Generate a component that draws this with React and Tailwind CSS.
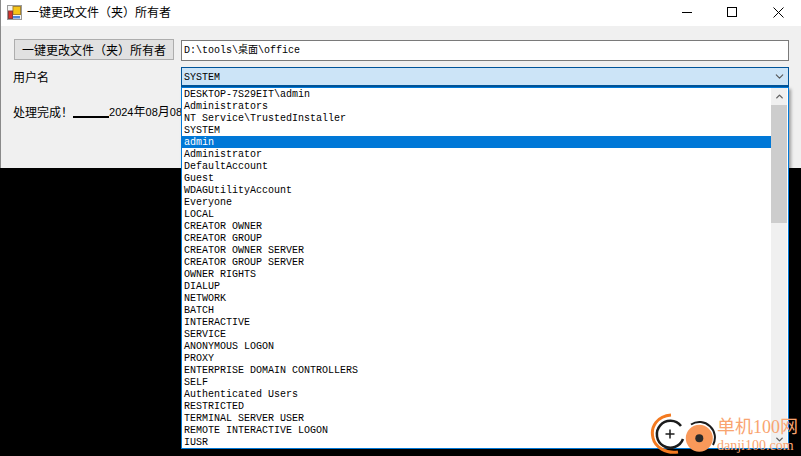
import { ChevronDown, ChevronUp } from 'lucide-react';

const USERS = [
  'DESKTOP-7S29EIT\\admin',
  'Administrators',
  'NT Service\\TrustedInstaller',
  'SYSTEM',
  'admin',
  'Administrator',
  'DefaultAccount',
  'Guest',
  'WDAGUtilityAccount',
  'Everyone',
  'LOCAL',
  'CREATOR OWNER',
  'CREATOR GROUP',
  'CREATOR OWNER SERVER',
  'CREATOR GROUP SERVER',
  'OWNER RIGHTS',
  'DIALUP',
  'NETWORK',
  'BATCH',
  'INTERACTIVE',
  'SERVICE',
  'ANONYMOUS LOGON',
  'PROXY',
  'ENTERPRISE DOMAIN CONTROLLERS',
  'SELF',
  'Authenticated Users',
  'RESTRICTED',
  'TERMINAL SERVER USER',
  'REMOTE INTERACTIVE LOGON',
  'IUSR',
];

const SANS = "font-['Noto_Sans_CJK_SC','Liberation_Sans',sans-serif]";
const MONO = "font-['Liberation_Mono','Noto_Sans_CJK_SC',monospace]";

function AppIcon() {
  return (
    <svg width="15" height="15" viewBox="0 0 15 15">
      <rect x="0.5" y="0.5" width="14" height="14" fill="#f4f4f4" stroke="#9a9a9a" />
      <rect x="6" y="1.5" width="7.5" height="8" fill="#f5c518" stroke="#a8842a" />
      <rect x="1.5" y="6" width="4" height="7.5" fill="#d8322a" stroke="#8a3a3a" />
      <rect x="6" y="11" width="7" height="2.5" fill="#4f86d9" />
    </svg>
  );
}

function WindowButtons() {
  return (
    <div className="flex items-center h-full pb-[2px]">
      <div className="w-[46px] h-full pl-[2px] flex items-center justify-center">
        <svg width="10" height="10" viewBox="0 0 10 10"><path d="M0 5.5H10" stroke="#000" fill="none" /></svg>
      </div>
      <div className="w-[46px] h-full flex items-center justify-center">
        <svg width="10" height="10" viewBox="0 0 10 10"><rect x="0.5" y="0.5" width="9" height="9" stroke="#000" fill="none" /></svg>
      </div>
      <div className="w-[46px] h-full flex items-center justify-center">
        <svg width="11" height="11" viewBox="0 0 11 11"><path d="M0.5 0.5L10.5 10.5M10.5 0.5L0.5 10.5" stroke="#000" fill="none" /></svg>
      </div>
    </div>
  );
}

function UserList() {
  return (
    <div className="absolute left-[181px] top-[87px] w-[608px] h-[362px] bg-white border border-[#0078d7] flex shadow-[2px_2px_3px_rgba(0,0,0,0.35)]">
      <ul className={`flex-1 ${MONO} text-[10px] text-black`}>
        {USERS.map((name) => (
          <li
            key={name}
            className={`h-3 leading-[14px] pl-[2px] whitespace-pre ${name === 'admin' ? 'bg-[#0078d7] text-white' : ''}`}
          >
            {name}
          </li>
        ))}
      </ul>
      <div className="w-[16px] mr-px flex flex-col bg-[#f0f0f0]">
        <div className="h-[17px] flex items-center justify-center text-[#606060]">
          <ChevronUp size={11} strokeWidth={3} />
        </div>
        <div className="h-[118px] bg-[#cdcdcd]" />
        <div className="flex-1" />
        <div className="h-[17px] flex items-center justify-center text-[#606060]">
          <ChevronDown size={11} strokeWidth={3} />
        </div>
      </div>
    </div>
  );
}

function Watermark() {
  return (
    <div className="absolute left-[650px] top-[412px] w-[151px] h-[44px] flex items-start">
      <svg width="66" height="44" viewBox="0 0 66 44" className="shrink-0">
        <path d="M21 3 C 8 4 0 14 3 26 C 5 35 16 42 28 40" stroke="#f47a20" strokeWidth="3" fill="none" />
        <path d="M31 14 A13.5 13.5 0 1 0 33 27" stroke="#1c1c1c" strokeWidth="2.5" fill="none" />
        <path d="M15.5 22H24.5M20 17.5V26.5" stroke="#1c1c1c" strokeWidth="1.5" />
        <circle cx="49.3" cy="26.3" r="13.5" fill="#f9995a" />
        <path d="M41 12.5 A15.5 15.5 0 0 1 63 33" stroke="#1c1c1c" strokeWidth="2" fill="none" />
        <circle cx="49.3" cy="26.3" r="4" fill="#2a2a2a" />
      </svg>
      <div className="flex flex-col ml-[1px] font-['Liberation_Serif','Noto_Sans_CJK_SC',serif] text-[#f9a470]">
        <span className="text-[18px] leading-[24px] mt-[3px] whitespace-nowrap">单机100网</span>
        <span className="text-[14px] leading-[14px] whitespace-nowrap">danji100.com</span>
      </div>
    </div>
  );
}

export default function App() {
  return (
    <div className={`relative w-[801px] h-[456px] bg-black overflow-hidden ${SANS}`}>
      <div className="h-[168px] bg-[#f0f0f0] border-l border-[#8a8a8a] flex flex-col">
        {/* Title bar */}
        <div className="h-[26px] bg-white flex items-center justify-between">
          <div className="flex items-center pl-[6px] pb-[2px]">
            <AppIcon />
            <span className="ml-[5px] text-[12px] text-black">一键更改文件（夹）所有者</span>
          </div>
          <WindowButtons />
        </div>

        {/* Form */}
        <div className="flex flex-col pl-[13px] pr-[12px] pt-[13px]">
          <div className="flex items-start">
            <button className="w-[160px] h-[21px] bg-[#e1e1e1] border border-[#adadad] text-[12px] leading-none text-black">
              一键更改文件（夹）所有者
            </button>
            <div className={`ml-[7px] mt-px flex-1 h-[21px] bg-white border border-[#7a7a7a] pl-[2px] leading-[19px] text-[10px] text-black ${MONO}`}>
              D:\tools\桌面\office
            </div>
          </div>
          <div className="flex items-start mt-[6px]">
            <span className="w-[168px] text-[12px] leading-[20px] text-black -ml-px">用户名</span>
            <div className={`flex-1 h-[20px] bg-[#cce4f7] border border-[#005499] border-b-2 pl-[2px] pr-[2px] flex items-center justify-between text-[10px] text-black ${MONO}`}>
              <span className="pt-px">SYSTEM</span>
              <ChevronDown size={13} className="text-[#555]" />
            </div>
          </div>
          <div className="flex items-end mt-[15px] -ml-px text-[12px] text-black whitespace-nowrap">
            <span>处理完成！</span>
            <span className="w-[36px] h-[2px] mb-[3px] bg-black" />
            <span className="font-['Liberation_Sans',sans-serif] text-[11px]">
              2024<span className={`text-[12px] ${SANS}`}>年</span>08<span className={`text-[12px] ${SANS}`}>月</span>08
            </span>
          </div>
        </div>
      </div>

      <UserList />
      <Watermark />
    </div>
  );
}
